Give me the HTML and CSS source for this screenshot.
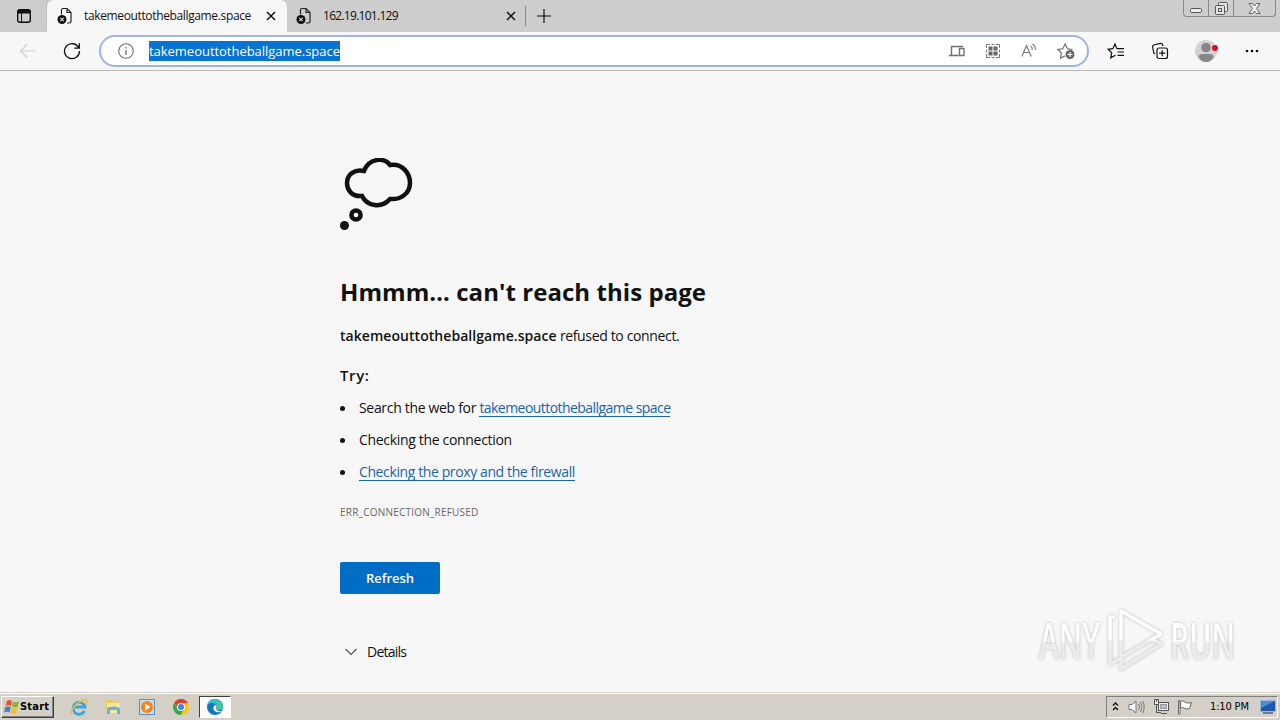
FILE: index.html
```html
<!DOCTYPE html>
<html lang="en">
<head>
  <meta charset="UTF-8" />
  <meta name="viewport" content="width=device-width, initial-scale=1.0"/>
  <title>takemeouttotheballgame.space</title>
  <link rel="stylesheet" href="styles.css">
</head>
<body>
  <svg width="0" height="0" class="defs">
    <symbol id="page-error" viewBox="0 0 16 18">
      <path d="M4.5 7.500V3Q4.500 1.500 6 1.500H10L14 5.500V14.500Q14 16 12.500 16H10M10 1.500V5.500H14" fill="none" stroke="#222" stroke-width="1.200"/>
      <circle cx="5" cy="12.500" r="4.500" fill="#111"/>
      <path d="M3.300 10.800L6.700 14.200M6.700 10.800L3.300 14.200" stroke="#ddd" stroke-width="1.100"/>
    </symbol>
    <symbol id="close" viewBox="0 0 10 10">
      <path d="M1 1L9 9M9 1L1 9" stroke="#111" stroke-width="1.500"/>
    </symbol>
  </svg>

  <div class="tabs">
    <div class="tab-menu">
      <svg width="16" height="16" viewBox="0 0 16 16"><rect x="1.700" y="1.700" width="12.600" height="12.600" rx="2" fill="none" stroke="#111" stroke-width="1.400"/><path d="M1.500 5.500V3.500Q1.500 1.500 3.500 1.500H12.500Q14.500 1.500 14.500 3.500V5.500Z" fill="#111"/><path d="M5.500 5V14" stroke="#111"/></svg>
    </div>
    <div class="tab active">
      <svg class="tab-icon"><use href="#page-error"/></svg>
      <span class="tab-title">takemeouttotheballgame.space</span>
      <svg class="tab-close"><use href="#close"/></svg>
    </div>
    <div class="tab">
      <svg class="tab-icon"><use href="#page-error"/></svg>
      <span class="tab-title ip">162.19.101.129</span>
      <svg class="tab-close"><use href="#close"/></svg>
    </div>
    <svg class="new-tab" width="14" height="14" viewBox="0 0 14 14"><path d="M7 0V14M0 7H14" stroke="#111" stroke-width="1.200"/></svg>
    <div class="window-buttons">
      <span><svg width="12" height="5" viewBox="0 0 12 5"><rect x=".5" y=".5" width="11" height="4" rx="1.200" fill="#eee" stroke="#555"/></svg></span>
      <span><svg width="13" height="13" viewBox="0 0 13 13" fill="#e4e4e4" stroke="#555"><rect x="3.500" y=".5" width="9" height="9" rx="1"/><rect x=".5" y="3.500" width="9" height="9" rx="1"/><rect x="3.500" y="6.500" width="3" height="3"/></svg></span>
      <span class="wide"><svg width="13" height="11" viewBox="0 0 13 11"><path d="M1 .5H4.500L6.500 3L8.500 .5H12L8.500 5.500L12 10.500H8.500L6.500 8L4.500 10.500H1L4.500 5.500Z" fill="#eee" stroke="#666"/></svg></span>
    </div>
  </div>

  <div class="toolbar">
    <svg class="back" width="18" height="16" viewBox="0 0 18 16" fill="none" stroke="#cfcfcf" stroke-width="1.200"><path d="M17 8H1.500M8 1.500L1.500 8L8 14.500"/></svg>
    <svg class="reload" width="18" height="18" viewBox="0 0 18 18" fill="none" stroke="#111" stroke-width="1.300"><path d="M15.800 6A7.500 7.500 0 1 0 16.500 9M16.300 1.200V6.200H11.300"/></svg>
    <div class="address">
      <svg class="info" width="16" height="16" viewBox="0 0 16 16"><circle cx="8" cy="8" r="7.300" fill="none" stroke="#6e6e6e" stroke-width="1.100"/><path d="M8 7V12M8 4V5.500" stroke="#6e6e6e" stroke-width="1.300"/></svg>
      <span class="url">takemeouttotheballgame.space</span>
      <div class="address-icons">
        <svg width="16" height="16" viewBox="0 0 16 16" fill="none" stroke="#707070" stroke-width="1.400"><path d="M14 3.500H2.500V12M0 12.500H9.500M10.500 5.500H15V12.500H10.500Z"/></svg>
        <svg width="16" height="16" viewBox="0 0 16 16"><path d="M1.500 5V1.500H5M6.500 1.500H9.500M11 1.500H14.500V5M14.500 6.500V9.500M14.500 11V14.500H11M9.500 14.500H6.500M5 14.500H1.500V11M1.500 9.500V6.500" fill="none" stroke="#777"/><path d="M3.500 3.500H7.500V7.500H3.500ZM8.500 3.500H12.500V7.500H8.500ZM3.500 8.500H7.500V12.500H3.500ZM8.500 8.500H12.500V12.500H8.500Z" fill="#666"/></svg>
        <svg width="16" height="16" viewBox="0 0 16 16" fill="none" stroke="#777" stroke-width="1.100"><path d="M.8 13.500L5.500 2.500L10.200 13.500M2.500 9.500H8.500M9.500 3Q11.500 4 11.300 7M11.500 1Q14.800 3 14.200 7"/></svg>
        <svg width="18" height="18" viewBox="0 0 18 18"><path d="M8 14L3.500 16L4.300 11L1 7.500L5.800 6.700L8.200 2L10.500 6.700L15.500 7.500" fill="none" stroke="#666" stroke-width="1.100"/><circle cx="13" cy="12.500" r="4.500" fill="#666"/><path d="M13 10V15M10.500 12.500H15.500" stroke="#fff" stroke-width="1.100"/></svg>
      </div>
    </div>
    <div class="actions">
      <svg width="18" height="18" viewBox="0 0 18 18" fill="none" stroke="#111" stroke-width="1.200"><path d="M10 7L8 2L5.800 6.700L1.200 7.300L4.700 10.700L3.800 15.800L8.500 13.200M10 6.700H17M10.500 10H17M10.500 13.300H17"/></svg>
      <svg width="18" height="18" viewBox="0 0 18 18" fill="none" stroke="#111" stroke-width="1.200"><rect x="6" y="6" width="10.500" height="10.500" rx="2"/><path d="M11.200 8.200V14.300M8.200 11.200H14.300M4 12Q3 11.500 2.700 10.500L1.600 5Q1.300 3.500 2.800 3L9.500 1.400Q11 1 11.600 2.500L12 4"/></svg>
      <svg class="profile" width="26" height="24" viewBox="0 0 26 24"><circle cx="12" cy="12" r="11" fill="#d3d3d3"/><circle cx="12" cy="8.500" r="4.800" fill="#888"/><path d="M4.500 18Q4.500 15 8 15H16Q19.500 15 19.500 18Q17 23 12 23Q7 23 4.500 18Z" fill="#888"/><circle cx="21" cy="9" r="3" fill="#e00b1c"/></svg>
      <svg width="14" height="4" viewBox="0 0 14 4"><circle cx="2" cy="2" r="1.300"/><circle cx="7" cy="2" r="1.300"/><circle cx="12" cy="2" r="1.300"/></svg>
    </div>
  </div>

  <div class="page">
    <div class="error">
      <svg class="cloud" width="74" height="74" viewBox="0 0 74 74" fill="none" stroke="#111" stroke-width="4.500">
        <path d="M24 13C29 0 44 -1 50 7C63 5 70 16 70 25C70 36 60 42 50 41C41 51 27 48 22 38C11 39 7 31 7 25C7 16 15 11 24 13Z"/>
        <circle cx="16" cy="57" r="4.600"/>
        <circle cx="4.500" cy="67.500" r="4.500" fill="#111" stroke="none"/>
      </svg>
      <h1>Hmmm… can't reach this page</h1>
      <p class="reason"><strong>takemeouttotheballgame.space</strong> <span>refused to connect.</span></p>
      <p class="try">Try:</p>
      <ul>
        <li>Search the web for <a href="#" class="search">takemeouttotheballgame space</a></li>
        <li>Checking the connection</li>
        <li><a href="#">Checking the proxy and the firewall</a></li>
      </ul>
      <div class="code">ERR_CONNECTION_REFUSED</div>
      <button type="button" class="refresh">Refresh</button>
      <div class="details">
        <svg width="12" height="8" viewBox="0 0 12 8"><path d="M.5 1L6 6.500L11.500 1" fill="none" stroke="#555" stroke-width="1.200"/></svg>
        <span>Details</span>
      </div>
    </div>
    <div class="watermark">
      <span>ANY</span>
      <svg width="58" height="64" viewBox="0 0 58 64" fill="none" stroke-width="3.500" stroke-linejoin="round">
        <linearGradient id="mark" x1="0" y1="0" x2="0" y2="64" gradientUnits="userSpaceOnUse"><stop offset=".5" stop-color="#fff"/><stop offset=".52" stop-color="#ececec"/></linearGradient>
        <path d="M14 3L54 26L14 49ZM8 9H3V56L14 50M14 49V61L54 36L44 31" stroke="url(#mark)"/>
      </svg>
      <span>RUN</span>
    </div>
  </div>

  <div class="taskbar">
    <div class="start">
      <svg width="16" height="16" viewBox="0 0 16 16"><path d="M3 2Q5 0 8 2L7 7Q4 5.500 1.500 7Z" fill="#e8532b"/><path d="M9 2.500Q12 4 15 2.500L13.500 8Q11 9 8 7.500Z" fill="#7fb539"/><path d="M1.200 8Q4 6.800 6.800 8.200L5.500 13.500Q3 12 0 13.500Z" fill="#3e83cf"/><path d="M7.700 8.700Q10.500 10 13.200 9L12 14.500Q9 15.500 6.400 14Z" fill="#f7bd28"/></svg>
      <span>Start</span>
    </div>
    <div class="apps">
      <span><svg width="18" height="18" viewBox="0 0 18 18" fill="none"><path d="M14.500 13A6 6 0 1 1 15 9H5" stroke="#39a5df" stroke-width="2.800"/><path d="M2 16C-1 14 6 5 12 2.500C17 .5 18 2 15.500 5.500" stroke="#efbd35" stroke-width="1.400"/></svg></span>
      <span><svg width="18" height="18" viewBox="0 0 18 18"><path d="M2 2H8L9.500 4H15V14H2Z" fill="#e9c85c"/><path d="M3 5H16V15H3Z" fill="#f7e59a"/><path d="M3 10Q9 7 16 10V16H13V12H6V16H3Z" fill="#68b2d8"/></svg></span>
      <span><svg width="18" height="18" viewBox="0 0 18 18"><rect x="1.500" y="1.500" width="15" height="15" fill="#c4dcee" stroke="#5b93c2"/><circle cx="9" cy="9" r="6" fill="#f58516"/><path d="M7 5.500L12.500 9L7 12.500Z" fill="#fff"/></svg></span>
      <span><svg width="18" height="18" viewBox="0 0 18 18"><circle cx="9" cy="9" r="8" fill="#fbc617"/><path d="M2.100 5A8 8 0 0 1 16 5H9V9H5Z" fill="#e33b2e"/><path d="M2.100 5A8 8 0 0 0 8.500 17L12 11H6Z" fill="#35a64c"/><circle cx="9" cy="9" r="4" fill="#fff"/><circle cx="9" cy="9" r="3" fill="#3d7ff0"/></svg></span>
      <span class="running"><svg width="18" height="18" viewBox="0 0 18 18"><circle cx="9" cy="9" r="8" fill="#1475c4"/><path d="M1 8Q2 1 9 1Q17 1.500 17 8Q17 12 12.500 12Q10 12 10.500 9Q10 5 6 5Q2 5 1 8Z" fill="#35bfc7"/><path d="M10.500 8Q9 12 12.500 13Q15 13.500 16.500 12Q14 15 10.500 14Q6 12 8 8Q9 6.500 10.500 8Z" fill="#fff"/><path d="M11 1.300Q17 2.500 17 8Q17 12 13 12Q10.500 12 10.500 10Q12 8 11 1.300Z" fill="#4ed07f" opacity=".6"/></svg></span>
    </div>
    <div class="tray">
      <svg width="7" height="11" viewBox="0 0 7 11" fill="none" stroke="#111" stroke-width="1.400"><path d="M1 4.500L3.500 2L6 4.500M1 9L3.500 6.500L6 9"/></svg>
      <svg class="sound" width="17" height="16" viewBox="0 0 17 16" fill="#fff" stroke="#777"><path d="M1 5.500H4L8 2V14L4 10.500H1Z"/><path d="M10.500 5Q12.500 8 10.500 11M12.500 3Q15.500 8 12.500 13M14.500 2Q18 8 14.500 14" fill="none"/></svg>
      <svg class="network" width="17" height="17" viewBox="0 0 17 17" fill="#ededed" stroke="#555"><rect x="5.500" y="4.500" width="10" height="8"/><rect x="7.500" y="6.500" width="6" height="4" fill="#bbb" stroke="#999"/><path d="M8 15.500H14M3.500 6.500V14.500H8" fill="none"/><path d="M1.500 1.500H5.500V6.500H1.500ZM3.500 1V4"/></svg>
      <svg class="flag" width="16" height="16" viewBox="0 0 16 16" fill="#fff" stroke="#666"><path d="M1.500 15V1.500H3V15ZM3.500 2.500Q6 1 8 3Q10 5 14.500 3.500L12.500 9.500Q9 11 7 9Q5.500 8 3.500 9Z"/></svg>
      <span class="clock">1:10 PM</span>
      <svg class="desktop" width="16" height="14" viewBox="0 0 16 14"><rect x=".5" y=".5" width="15" height="11" fill="#1d59a8" stroke="#9bb8d6"/><path d="M1 1H15L1 8Z" fill="#4d8cd2"/><path d="M3 13H13" stroke="#777" stroke-width="2"/></svg>
    </div>
  </div>
</body>
</html>
```
FILE: styles.css
```css
* { box-sizing: border-box; }
body {
  margin: 0;
  width: 1280px;
  height: 720px;
  overflow: hidden;
  display: flex;
  flex-direction: column;
  font-family: "Open Sans", "Noto Sans", sans-serif;
  background: #f7f7f7;
  color: #111;
}
svg { display: block; flex: none; }
.defs { position: absolute; }

.tabs { height: 32px; flex: none; display: flex; background: #cdcdcd; }
.tab-menu { width: 47px; padding: 8px 0 0 16px; border-radius: 0 0 6px 0; border-right: 1px solid #c0c0c0; }
.tab { width: 240px; display: flex; align-items: center; padding: 0 11px 0 10px; white-space: nowrap; }
.tab.active { background: #f7f7f7; border-radius: 7px 7px 0 0; }
.tab:not(.active) { width: 239px; padding: 0 10px 0 9px; background: linear-gradient(#888, #888) right 6px / 1px 20px no-repeat; }
.tab-icon { width: 16px; height: 18px; }
.tab-title { flex: 1; margin-left: 11px; font-size: 12px; line-height: 32px; letter-spacing: -.36px; }
.tab-title.ip { letter-spacing: -.72px; }
.tab-close { width: 10px; height: 10px; }
.new-tab { margin: 9px 0 0 11px; }
.window-buttons {
  margin: 0 4px 0 auto; height: 17px; display: flex;
  border: 1px solid #888; border-top: 0; border-radius: 0 0 4px 4px;
}
.window-buttons span { width: 25px; display: flex; align-items: center; justify-content: center; border-right: 1px solid #888; }
.window-buttons span:first-child svg { margin-top: 5px; }
.window-buttons .wide { width: 41px; border: 0; }

.toolbar { height: 39px; flex: none; display: flex; align-items: center; border-bottom: 1px solid #b8b8b8; background: #f7f7f7; }
.back { margin-left: 19px; }
.reload { margin-left: 26px; }
.address {
  width: 990px; height: 32px; margin-left: 18px; padding: 0 12px 0 17px;
  display: flex; align-items: center;
  border: 2px solid #9db5df; border-radius: 16px; background: #fff;
}
.url { margin-left: 15px; height: 20px; line-height: 20px; background: #0873d0; color: #fff; font-size: 13px; letter-spacing: -.03px; }
.address-icons { margin-left: auto; display: flex; align-items: center; gap: 20px; }
.actions { flex: 1; display: flex; align-items: center; padding-left: 18px; }
.actions svg:nth-child(2) { margin-left: 26px; }
.actions .profile { margin-left: 25px; }
.actions svg:last-child { margin-left: 25px; }

.page { flex: 1; position: relative; background: #f7f7f7; }
.error { margin-left: 340px; width: 600px; padding-top: 87px; font-size: 14px; letter-spacing: -.35px; }
.cloud { margin-bottom: 44px; }
h1 { margin: 0; font-size: 24px; line-height: 32px; font-weight: 700; letter-spacing: .06px; }
p { margin: 0; line-height: 20px; }
.reason { margin-top: 18px; }
.reason strong { font-weight: 600; letter-spacing: .05px; }
.try { margin-top: 19px; font-weight: 600; font-size: 15px; letter-spacing: .6px; }
ul { margin: 13px 0 0; padding: 0; list-style: none; }
li { height: 20px; line-height: 20px; margin-bottom: 12px; letter-spacing: -.32px; }
li::before { content: ""; display: inline-block; width: 5px; height: 5px; margin-right: 14px; border-radius: 50%; background: #111; vertical-align: 2px; }
a { display: inline-block; height: 19px; line-height: 20px; color: #1764a8; text-decoration: none; border-bottom: 1px solid #1764a8; vertical-align: top; letter-spacing: -.39px; }
.search { letter-spacing: -.55px; }
.code { margin-top: 22px; font-size: 10px; line-height: 16px; color: #666; letter-spacing: .22px; }
.refresh {
  display: block; width: 100px; height: 32px; margin-top: 42px; padding: 0;
  border: 0; border-radius: 2px; background: #006dc5; color: #fff;
  font: 600 13px "Open Sans", sans-serif;
}
.details { display: flex; align-items: center; gap: 10px; margin: 48px 0 0 5px; line-height: 20px; letter-spacing: -.75px; }
.watermark {
  position: absolute; left: 1039px; top: 537px; display: flex; align-items: center; gap: 5px;
  font: 600 50px "Open Sans", sans-serif; line-height: 64px;
  filter: drop-shadow(0 0 1.5px #bbb);
}
.watermark span {
  width: 108px; padding-right: 45px; margin-right: -45px; white-space: nowrap;
  transform: scaleX(.6); transform-origin: left;
  color: transparent; background: linear-gradient(#fff 52%, #ececec 54%); -webkit-background-clip: text; background-clip: text;
}

.taskbar {
  height: 28px; flex: none; display: flex; align-items: center;
  background: #d4d0c8; border-top: 1px solid #d4d0c8; box-shadow: inset 0 1px #fff;
}
.start {
  width: 53px; height: 22px; margin: 0 0 0 1px; padding-left: 2px;
  display: flex; align-items: center;
  border: 1px solid; border-color: #fff #404040 #404040 #fff; box-shadow: inset -1px -1px #808080;
  font: bold 11px "DejaVu Sans Condensed", sans-serif; letter-spacing: .2px; color: #000;
}
.apps { display: flex; margin: 0 0 0 9px; gap: 2px; }
.apps span { width: 32px; height: 22px; display: flex; align-items: center; justify-content: center; }
.apps .running { border: 1px solid; border-color: #404040 #fff #fff #404040; background: #fff; }
.tray {
  width: 172px; height: 22px; margin: 0 2px 0 auto; padding-left: 5px;
  display: flex; align-items: center;
  border: 1px solid; border-color: #808080 #fff #fff #808080;
  font: 11px "DejaVu Sans Condensed", sans-serif; color: #000;
}
.sound { margin-left: 9px; }
.network { margin-left: 8px; }
.flag { margin-left: 7px; }
.clock { width: 40px; margin-left: 17px; white-space: nowrap; letter-spacing: -.15px; }
.desktop { margin-left: 10px; }
```
